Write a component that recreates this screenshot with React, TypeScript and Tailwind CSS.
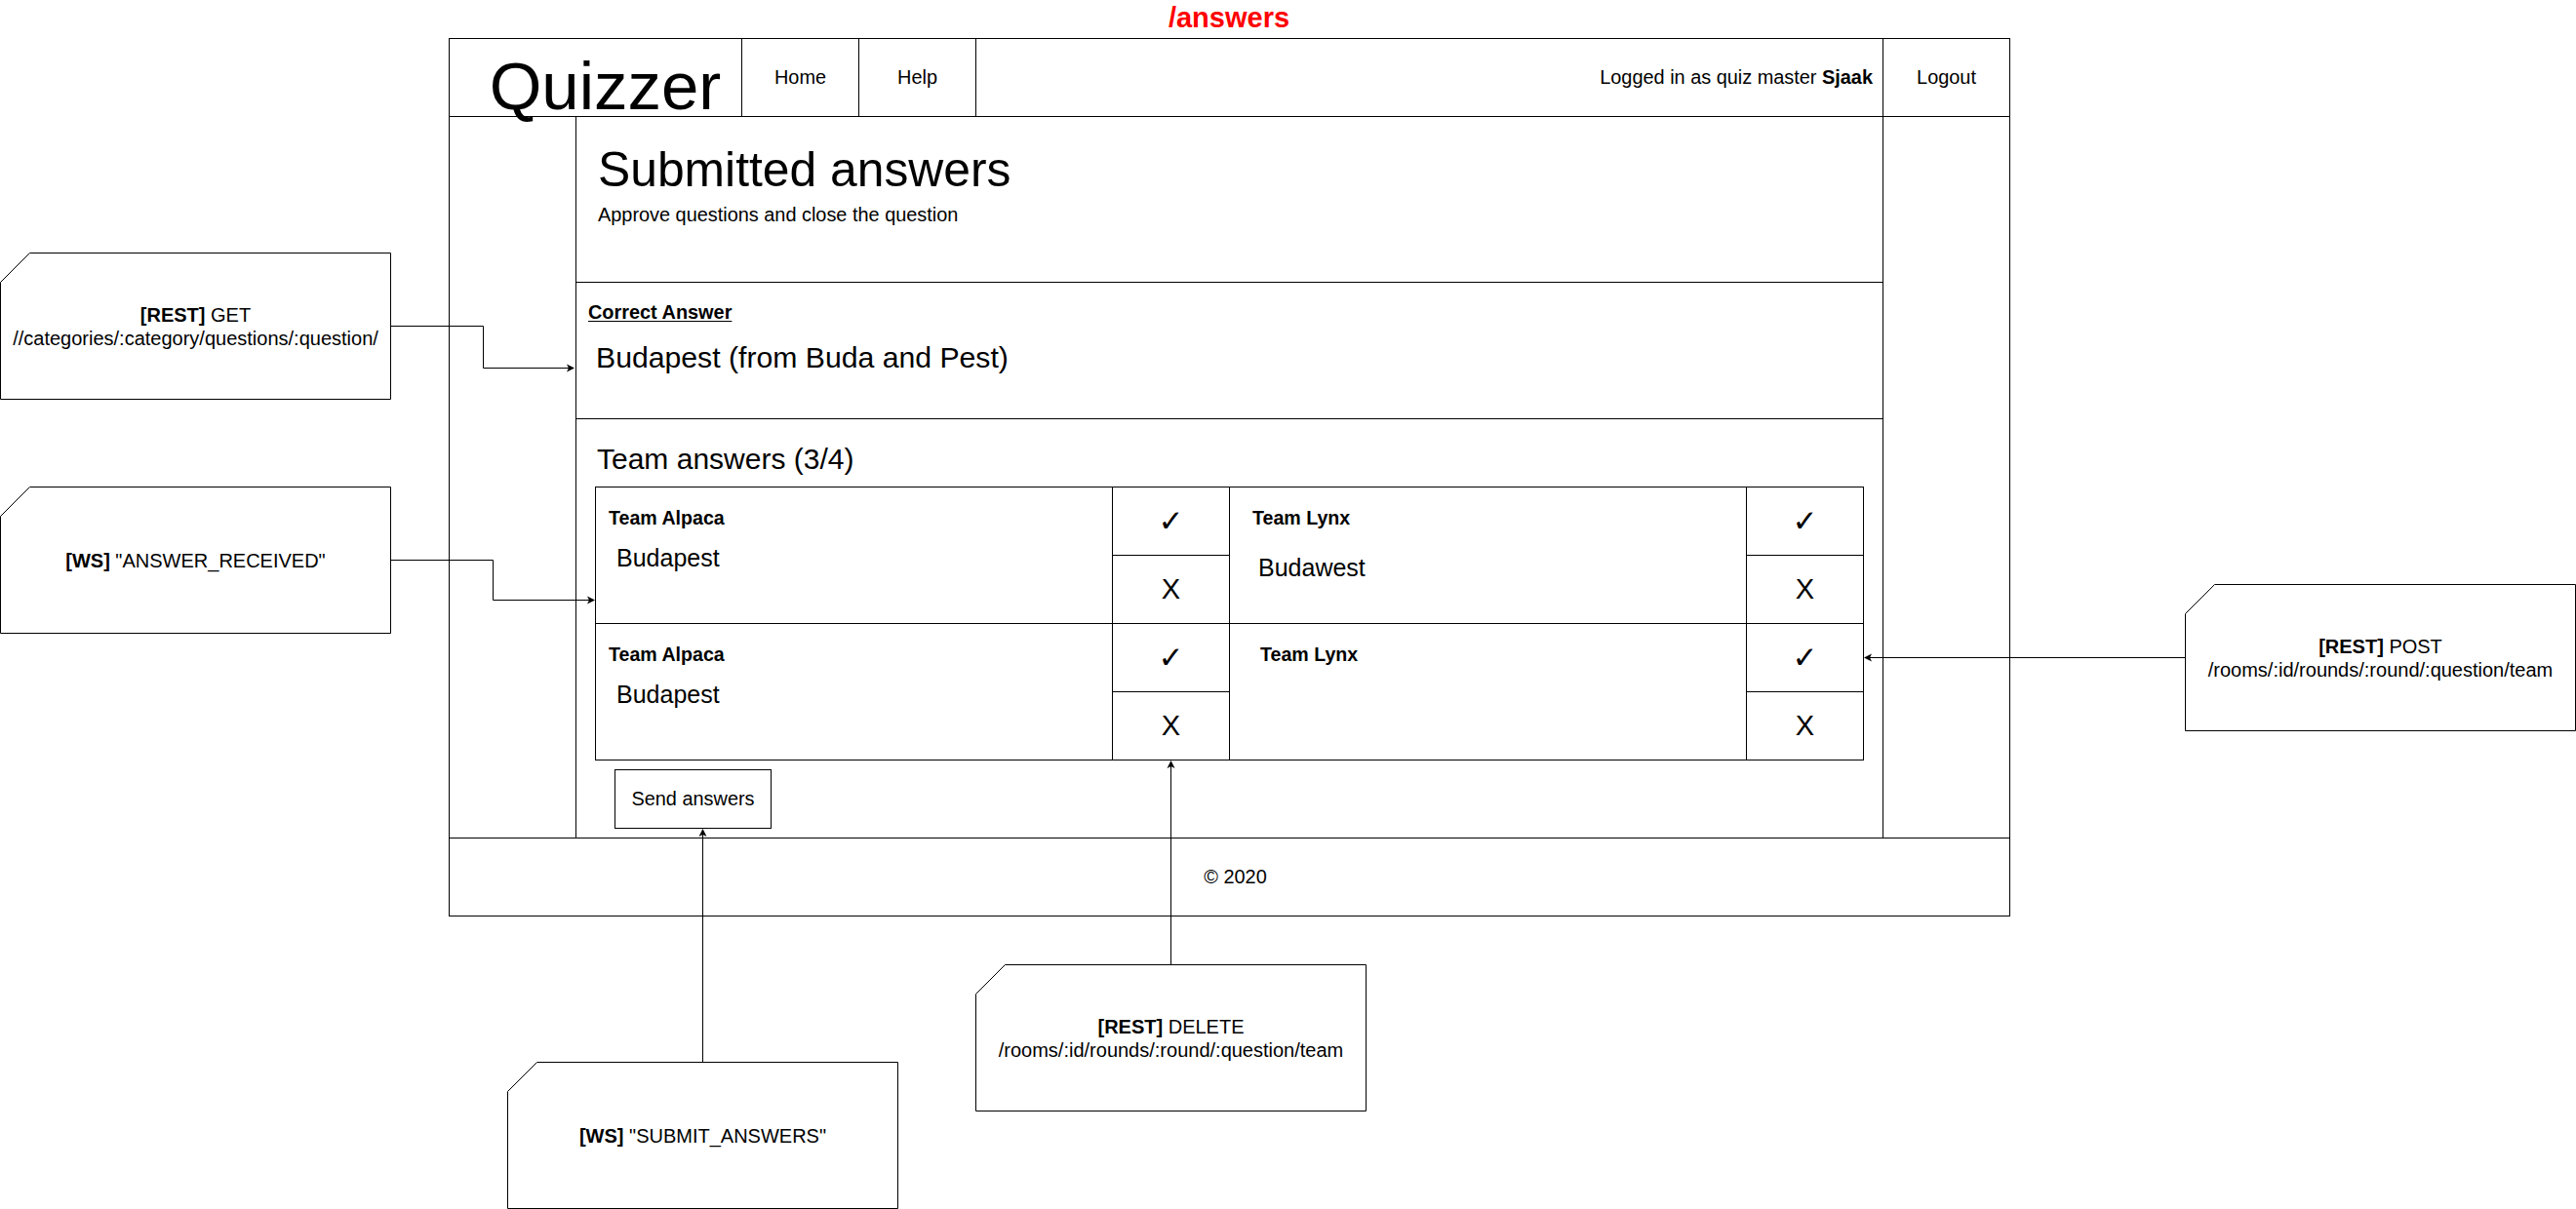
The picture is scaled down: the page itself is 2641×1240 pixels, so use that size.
import React from "react";

function Note({ className, children }: { className: string; children: React.ReactNode }) {
  return (
    <div className={"absolute w-[401px] h-[151px] flex flex-col items-center justify-center text-[20px] leading-[24px] text-center " + className}>
      <svg className="absolute inset-0" width="401" height="151" viewBox="0 0 401 151">
        <polygon points="30.5,0.5 400.5,0.5 400.5,150.5 0.5,150.5 0.5,30.5" fill="white" stroke="black" strokeWidth="1" />
      </svg>
      <div className="relative">{children}</div>
    </div>
  );
}

function Check() {
  return <span className="font-['DejaVu_Sans',sans-serif] text-[31px] leading-none">✓</span>;
}

function Cross() {
  return <span className="text-[29px] leading-none">X</span>;
}

function Buttons() {
  return (
    <div className="flex flex-col gap-px bg-black">
      <div className="h-[69px] bg-white flex items-center justify-center"><Check /></div>
      <div className="h-[69px] bg-white flex items-center justify-center"><Cross /></div>
    </div>
  );
}

export default function App() {
  return (
    <div className="relative w-[2641px] h-[1240px] bg-white text-black font-['Liberation_Sans',Arial,sans-serif] overflow-hidden">
      <div className="absolute left-[1160px] top-[3px] w-[200px] text-center text-[29px] leading-[30px] font-bold text-[#ff0000]">/answers</div>

      <div className="absolute left-[460px] top-[39px] w-[1601px] h-[901px] border border-black flex flex-col">
        {/* header */}
        <div className="flex h-[80px] shrink-0 border-b border-black text-[19.9px]">
          <div className="w-[300px] border-r border-black pt-[14px] pl-[20px] text-center text-[69px] leading-[69px]">Quizzer</div>
          <div className="w-[120px] border-r border-black flex items-center justify-center">Home</div>
          <div className="w-[120px] border-r border-black flex items-center justify-center">Help</div>
          <div className="flex-1 flex items-center justify-end pr-[10px]">
            <span>Logged in as quiz master <b>Sjaak</b></span>
          </div>
          <div className="w-[130px] border-l border-black flex items-center justify-center">Logout</div>
        </div>

        {/* body */}
        <div className="flex h-[740px] shrink-0 border-b border-black">
          <div className="w-[130px] border-r border-black" />
          <div className="flex-1 flex flex-col">
            <div className="h-[170px] shrink-0 border-b border-black pl-[22px] pt-[30px]">
              <div className="text-[49.8px] leading-[49px]">Submitted answers</div>
              <div className="mt-[11px] text-[19.9px] leading-[20px]">Approve questions and close the question</div>
            </div>
            <div className="h-[140px] shrink-0 border-b border-black pt-[20px] pl-[12px]">
              <div className="text-[19.9px] leading-[20px] font-bold underline underline-offset-2">Correct Answer</div>
              <div className="mt-[22px] ml-[8px] text-[30.2px] leading-[30px]">Budapest (from Buda and Pest)</div>
            </div>
            <div className="flex-1 pt-[26px] pl-[19px]">
              <div className="ml-[2px] text-[30px] leading-[30px]">Team answers (3/4)</div>
              <div className="mt-[13px] w-[1301px] grid grid-cols-[529px_119px_529px_119px] grid-rows-[139px_139px] gap-px p-px bg-black">
                <div className="bg-white pt-[22px] pl-[13px]">
                  <div className="text-[19.6px] leading-[19px] font-bold">Team Alpaca</div>
                  <div className="mt-[19px] ml-[8px] text-[25px] leading-[25px]">Budapest</div>
                </div>
                <Buttons />
                <div className="bg-white pt-[22px] pl-[23px]">
                  <div className="text-[19.6px] leading-[19px] font-bold">Team Lynx</div>
                  <div className="mt-[29px] ml-[6px] text-[25px] leading-[25px]">Budawest</div>
                </div>
                <Buttons />
                <div className="bg-white pt-[22px] pl-[13px]">
                  <div className="text-[19.6px] leading-[19px] font-bold">Team Alpaca</div>
                  <div className="mt-[19px] ml-[8px] text-[25px] leading-[25px]">Budapest</div>
                </div>
                <Buttons />
                <div className="bg-white pt-[22px] pl-[31px]">
                  <div className="text-[19.6px] leading-[19px] font-bold">Team Lynx</div>
                </div>
                <Buttons />
              </div>
              <div className="mt-[9px] ml-[20px] w-[161px] h-[61px] border border-black flex items-center justify-center text-[19.9px]">Send answers</div>
            </div>
          </div>
          <div className="w-[130px] border-l border-black" />
        </div>

        {/* footer */}
        <div className="flex-1 flex items-center justify-center pl-[12px] text-[19.9px]">© 2020</div>
      </div>

      <Note className="left-0 top-[259px]">
        <div><b>[REST]</b> GET</div>
        <div>//categories/:category/questions/:question/</div>
      </Note>
      <Note className="left-0 top-[499px]">
        <div><b>[WS]</b> "ANSWER_RECEIVED"</div>
      </Note>
      <Note className="left-[2240px] top-[599px]">
        <div><b>[REST]</b> POST</div>
        <div>/rooms/:id/rounds/:round/:question/team</div>
      </Note>
      <Note className="left-[1000px] top-[989px]">
        <div><b>[REST]</b> DELETE</div>
        <div>/rooms/:id/rounds/:round/:question/team</div>
      </Note>
      <Note className="left-[520px] top-[1089px]">
        <div><b>[WS]</b> "SUBMIT_ANSWERS"</div>
      </Note>

      <svg className="absolute inset-0 pointer-events-none" width="2641" height="1240" viewBox="0 0 2641 1240">
        <g stroke="black" strokeWidth="1" fill="none">
          <path d="M400 334.5 H495.5 V377.5 H583" />
          <path d="M400 574.5 H505.5 V615.5 H604" />
          <path d="M2240 674.5 H1917" />
          <path d="M1200.5 989 V786" />
          <path d="M720.5 1089 V856" />
        </g>
        <g fill="black">
          <polygon points="589,377.5 581,373.5 583,377.5 581,381.5" />
          <polygon points="610,615.5 602,611.5 604,615.5 602,619.5" />
          <polygon points="1911,674.5 1919,670.5 1917,674.5 1919,678.5" />
          <polygon points="1200.5,780 1196.5,788 1200.5,786 1204.5,788" />
          <polygon points="720.5,850 716.5,858 720.5,856 724.5,858" />
        </g>
      </svg>
    </div>
  );
}
